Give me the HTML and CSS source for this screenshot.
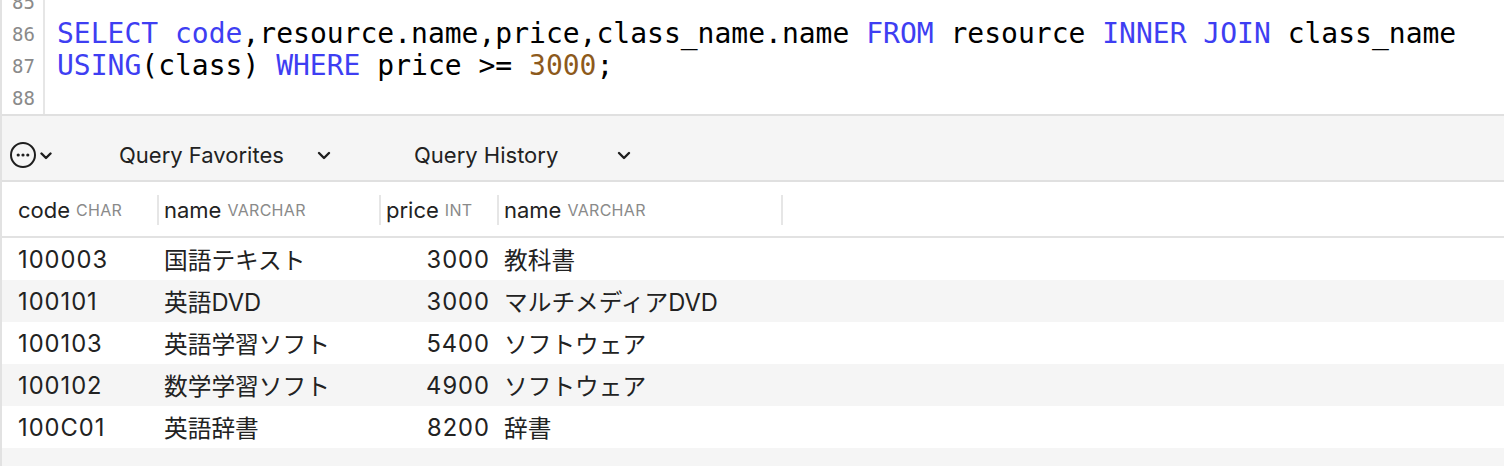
FILE: index.html
```html
<!DOCTYPE html>
<html lang="ja">
<head>
<meta charset="utf-8">
<title>Query</title>
<link rel="stylesheet" href="styles.css">
</head>
<body>
<div class="app">
  <div class="editor">
    <div class="gutter">
      <div class="ln">85</div>
      <div class="ln">86</div>
      <div class="ln">87</div>
      <div class="ln">88</div>
    </div>
    <div class="code">
      <div class="line">&nbsp;</div>
      <div class="line"><span class="kw">SELECT</span> <span class="kw">code</span>,resource.name,price,class_name.name <span class="kw">FROM</span> resource <span class="kw">INNER</span> <span class="kw">JOIN</span> class_name</div>
      <div class="line"><span class="kw">USING</span>(class) <span class="kw">WHERE</span> price &gt;= <span class="num">3000</span>;</div>
      <div class="line">&nbsp;</div>
    </div>
  </div>

  <div class="toolbar">
    <div class="menu">
      <svg class="more" width="26" height="26" viewBox="0 0 26 26">
        <circle cx="13" cy="13" r="12" fill="none" stroke="#1e1e1e" stroke-width="2"/>
        <circle cx="8.2" cy="13" r="1.6" fill="#1e1e1e"/>
        <circle cx="13" cy="13" r="1.6" fill="#1e1e1e"/>
        <circle cx="17.8" cy="13" r="1.6" fill="#1e1e1e"/>
      </svg>
      <svg class="chev" width="12" height="8" viewBox="0 0 12 8"><polyline points="1.5,1.5 6,6 10.5,1.5" fill="none" stroke="#1e1e1e" stroke-width="2.4" stroke-linecap="round" stroke-linejoin="round"/></svg>
    </div>
    <div class="drop fav">
      <span class="label">Query Favorites</span>
      <svg class="chev" width="14" height="9" viewBox="0 0 14 9"><polyline points="2,2 7,7 12,2" fill="none" stroke="#1e1e1e" stroke-width="2.4" stroke-linecap="round" stroke-linejoin="round"/></svg>
    </div>
    <div class="drop hist">
      <span class="label">Query History</span>
      <svg class="chev" width="14" height="9" viewBox="0 0 14 9"><polyline points="2,2 7,7 12,2" fill="none" stroke="#1e1e1e" stroke-width="2.4" stroke-linecap="round" stroke-linejoin="round"/></svg>
    </div>
  </div>

  <div class="results">
    <div class="row head">
      <div class="hc c1">code <span class="type">CHAR</span></div>
      <div class="hc c2">name <span class="type">VARCHAR</span></div>
      <div class="hc c3">price <span class="type">INT</span></div>
      <div class="hc c4">name <span class="type">VARCHAR</span></div>
    </div>
    <div class="row">
      <div class="cell c1">100003</div><div class="cell c2">国語テキスト</div><div class="cell c3">3000</div><div class="cell c4">教科書</div>
    </div>
    <div class="row alt">
      <div class="cell c1">100101</div><div class="cell c2">英語DVD</div><div class="cell c3">3000</div><div class="cell c4">マルチメディアDVD</div>
    </div>
    <div class="row">
      <div class="cell c1">100103</div><div class="cell c2">英語学習ソフト</div><div class="cell c3">5400</div><div class="cell c4">ソフトウェア</div>
    </div>
    <div class="row alt">
      <div class="cell c1">100102</div><div class="cell c2">数学学習ソフト</div><div class="cell c3">4900</div><div class="cell c4">ソフトウェア</div>
    </div>
    <div class="row">
      <div class="cell c1">100C01</div><div class="cell c2">英語辞書</div><div class="cell c3">8200</div><div class="cell c4">辞書</div>
    </div>
    <div class="row alt filler"></div>
  </div>
</div>
</body>
</html>
```

FILE: styles.css
```css
html, body {
  margin: 0;
  padding: 0;
  background: #ffffff;
  height: 100%;
  overflow: hidden;
}

.app {
  border-left: 2px solid #e2e2e2;
  height: 466px;
  font-family: Inter, "Noto Sans CJK JP", sans-serif;
  color: #222222;
}

/* editor */
.editor {
  display: flex;
  height: 114px;
  overflow: hidden;
  border-bottom: 2px solid #e0e0e0;
}

.gutter {
  width: 41px;
  flex: none;
  border-right: 2px solid #e6e6e6;
  margin-top: -14px;
}

.ln {
  height: 32px;
  line-height: 32px;
  text-align: right;
  padding-right: 8px;
  font-family: "DejaVu Sans Mono", monospace;
  font-size: 19px;
  color: #8a8a8a;
}

.code {
  flex: 1;
  padding-left: 12px;
  margin-top: -14px;
  font-family: "DejaVu Sans Mono", monospace;
  font-size: 28px;
  color: #000000;
}

.line {
  height: 32px;
  line-height: 32px;
  white-space: pre;
}

.kw { color: #3e3ef2; }
.num { color: #8d5a1c; }

/* toolbar */
.toolbar {
  display: flex;
  align-items: center;
  box-sizing: border-box;
  height: 66px;
  padding-top: 14px;
  background: #f5f5f5;
  border-bottom: 2px solid #e0e0e0;
  padding-left: 8px;
}

.menu {
  display: flex;
  align-items: center;
  gap: 4px;
}

.menu .chev { margin-top: 1px; }

.drop {
  display: flex;
  align-items: center;
  font-size: 22px;
  color: #222222;
}

.drop .label { flex: 1; }

.fav {
  margin-left: 67px;
  width: 212px;
}

.hist {
  margin-left: 83px;
  width: 217px;
}

/* results */
.row {
  display: grid;
  grid-template-columns: 155px 222px 118px 286px;
  height: 42px;
  align-items: center;
  font-size: 23.7px;
}

.row.alt { background: #f5f5f5; }

.row.head {
  height: 30px;
  padding: 13px 0 11px;
  border-bottom: 2px solid #e2e2e2;
  align-items: stretch;
  font-size: 22px;
}

.hc {
  display: flex;
  align-items: center;
  gap: 6px;
  padding-left: 5px;
  border-left: 2px solid #e6e6e6;
  white-space: nowrap;
}

.hc.c1 {
  border-left: none;
  padding-left: 16px;
}

.hc.c4 { border-right: 2px solid #e6e6e6; }

.type {
  font-size: 16px;
  color: #8a8a8a;
  letter-spacing: 0.3px;
}

.cell {
  padding-left: 7px;
  white-space: nowrap;
}

.cell.c1 {
  padding-left: 16px;
  letter-spacing: 1px;
}

.cell.c3 {
  text-align: right;
  padding-right: 7px;
  padding-left: 0;
  letter-spacing: 1px;
}

.filler { height: 18px; }
```
